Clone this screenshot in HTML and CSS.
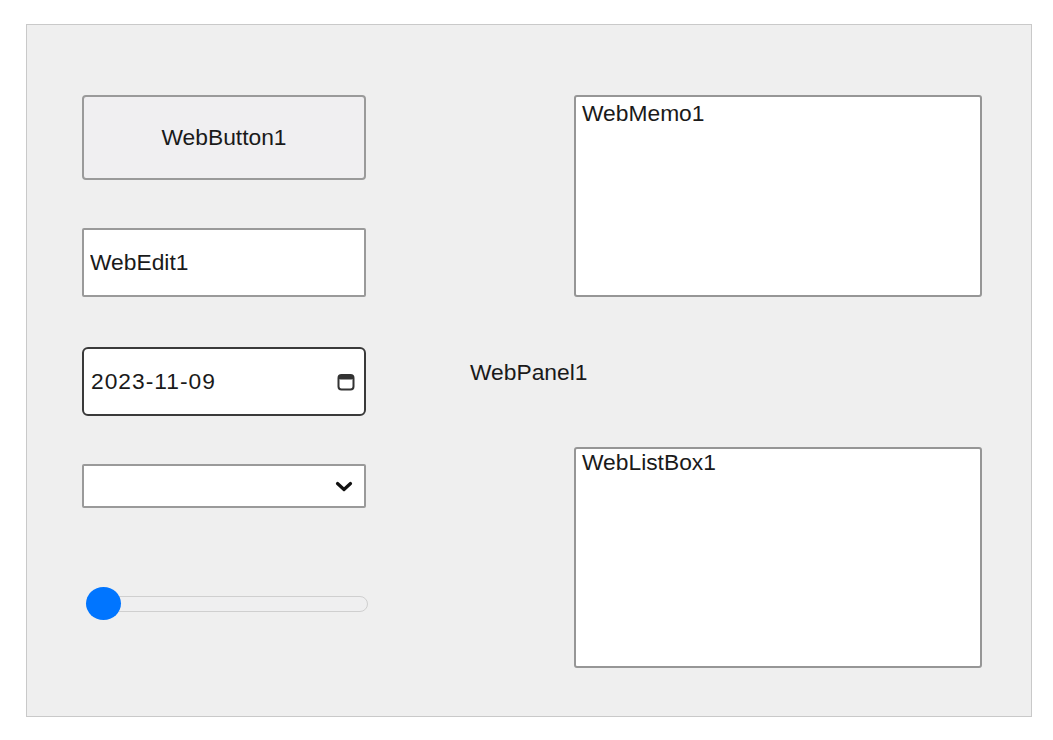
FILE: index.html
```html
<!DOCTYPE html>
<html lang="en">
<head>
<meta charset="utf-8">
<title>WebForm</title>
<link rel="stylesheet" href="styles.css">
</head>
<body>
<div class="panel">
  <div class="col-left">
    <button class="btn" type="button">WebButton1</button>
    <input class="edit" type="text" value="WebEdit1">
    <div class="date">
      <span class="date-text">2023-11-09</span>
      <svg class="cal" width="18" height="18" viewBox="0 0 18 18" aria-hidden="true">
        <rect x="1.5" y="2" width="15" height="14.5" rx="3" fill="none" stroke="#333" stroke-width="2"/>
        <rect x="1.5" y="2" width="15" height="4.5" rx="2" fill="#333"/>
      </svg>
    </div>
    <div class="select">
      <svg class="chev" width="18" height="11" viewBox="0 0 18 11" aria-hidden="true">
        <polyline points="2.5,2.5 9,8.5 15.5,2.5" fill="none" stroke="#111" stroke-width="3.2" stroke-linecap="round" stroke-linejoin="round"/>
      </svg>
    </div>
    <div class="range">
      <div class="track"></div>
      <div class="thumb"></div>
    </div>
  </div>
  <div class="col-mid">
    <span class="label">WebPanel1</span>
  </div>
  <div class="col-right">
    <textarea class="memo">WebMemo1</textarea>
    <div class="listbox">WebListBox1</div>
  </div>
</div>
</body>
</html>
```
FILE: styles.css
```css
html, body {
  margin: 0;
  padding: 0;
  background: #ffffff;
}

body {
  font-family: "Liberation Sans", Arial, sans-serif;
  font-size: 22.8px;
  color: #1a1a1a;
}

.panel {
  box-sizing: border-box;
  margin: 24px 0 0 26px;
  width: 1006px;
  height: 693px;
  border: 1px solid #c9c9c9;
  background: #efefef;
  padding: 70px 0 0 55px;
  display: grid;
  grid-template-columns: 284px 208px 408px;
  align-items: start;
}

.col-left {
  display: flex;
  flex-direction: column;
}

.btn,
.edit,
.date,
.select,
.memo,
.listbox {
  box-sizing: border-box;
  font-family: inherit;
  font-size: inherit;
  color: inherit;
  margin: 0;
}

.btn {
  width: 284px;
  height: 85px;
  border: 2px solid #9a9a9a;
  border-radius: 4px;
  background: #f0eff1;
  padding: 0;
  line-height: normal;
}

.edit {
  margin-top: 48px;
  width: 284px;
  height: 69px;
  border: 2px solid #9a9a9a;
  border-radius: 2px;
  background: #ffffff;
  padding: 0 6px;
  outline: none;
}

.date {
  margin-top: 50px;
  width: 284px;
  height: 69px;
  border: 2px solid #3a3a3a;
  border-radius: 6px;
  background: #ffffff;
  padding: 0 9px 0 7px;
  display: flex;
  align-items: center;
  justify-content: space-between;
}

.date-text {
  letter-spacing: 1px;
}

.cal {
  display: block;
}

.select {
  margin-top: 48px;
  width: 284px;
  height: 44px;
  border: 2px solid #9a9a9a;
  border-radius: 2px;
  background: #ffffff;
  display: flex;
  align-items: center;
  justify-content: flex-end;
  padding: 1px 11px 0 0;
}

.chev {
  display: block;
}

.range {
  position: relative;
  margin-top: 79px;
  margin-left: 4px;
  width: 282px;
  height: 34px;
  display: flex;
  align-items: center;
}

.track {
  box-sizing: border-box;
  width: 100%;
  height: 16px;
  border: 1.5px solid #cfcfcf;
  border-radius: 8px;
  background: #efeff0;
}

.thumb {
  position: absolute;
  left: 0;
  top: 0;
  width: 35px;
  height: 33px;
  border-radius: 50%;
  background: #0075ff;
}

.col-mid {
  padding: 264px 0 0 104px;
}

.label {
  line-height: normal;
  white-space: nowrap;
}

.col-right {
  display: flex;
  flex-direction: column;
}

.memo {
  display: block;
  width: 408px;
  height: 202px;
  border: 2px solid #969696;
  border-radius: 3px;
  background: #ffffff;
  padding: 3px 6px;
  resize: none;
  overflow: hidden;
  line-height: normal;
  outline: none;
}

.listbox {
  margin-top: 150px;
  width: 408px;
  height: 221px;
  border: 2px solid #969696;
  border-radius: 3px;
  background: #ffffff;
  padding: 0 6px;
  line-height: normal;
}
```
